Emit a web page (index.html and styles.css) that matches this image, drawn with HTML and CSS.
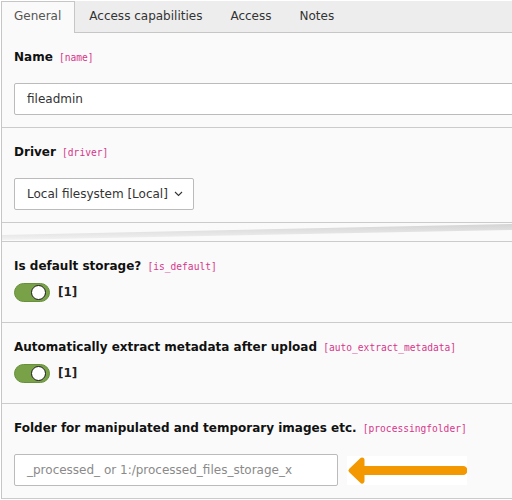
FILE: index.html
```html
<!DOCTYPE html>
<html lang="en">
<head>
<meta charset="utf-8">
<title>File storage</title>
<link rel="stylesheet" href="styles.css">
</head>
<body>
<div class="editor">
  <ul class="tabs">
    <li class="tab active">General</li>
    <li class="tab">Access capabilities</li>
    <li class="tab">Access</li>
    <li class="tab">Notes</li>
  </ul>
  <div class="panel">
    <div class="field">
      <div class="label">Name <code class="key">[name]</code></div>
      <div class="control control-wide">fileadmin</div>
    </div>
    <div class="field">
      <div class="label">Driver <code class="key">[driver]</code></div>
      <div class="control control-select">
        <span>Local filesystem [Local]</span>
        <svg class="chevron" width="9" height="6" viewBox="0 0 9 6"><path d="M1 1 L4.5 4.5 L8 1" fill="none" stroke="#333" stroke-width="1.1"/></svg>
      </div>
    </div>
    <div class="tear">
      <svg class="tear-svg" viewBox="0 0 512 18" preserveAspectRatio="none">
        <defs>
          <linearGradient id="g" x1="0" y1="0" x2="0" y2="1">
            <stop offset="0" stop-color="#d4d4d4"/>
            <stop offset="1" stop-color="#f2f2f2"/>
          </linearGradient>
        </defs>
        <polygon points="0,12 512,1 512,7 0,17" fill="url(#g)"/>
      </svg>
    </div>
    <div class="field field-check">
      <div class="label">Is default storage? <code class="key">[is_default]</code></div>
      <div class="check-row">
        <span class="toggle"><span class="knob"></span></span>
        <span class="check-value">[1]</span>
      </div>
    </div>
    <div class="field field-check">
      <div class="label">Automatically extract metadata after upload <code class="key">[auto_extract_metadata]</code></div>
      <div class="check-row">
        <span class="toggle"><span class="knob"></span></span>
        <span class="check-value">[1]</span>
      </div>
    </div>
    <div class="field">
      <div class="label">Folder for manipulated and temporary images etc. <code class="key">[processingfolder]</code></div>
      <div class="folder-row">
        <div class="control control-folder placeholder">_processed_ or 1:/processed_files_storage_x</div>
        <div class="arrow-box">
          <svg width="120" height="29" viewBox="0 0 120 29">
            <path d="M15 4 L4 14.5 L15 25 Z" fill="#f39800" stroke="#f39800" stroke-width="5" stroke-linejoin="round"/>
            <path d="M12 14.5 L116 14.5" stroke="#f39800" stroke-width="9" stroke-linecap="round"/>
          </svg>
        </div>
      </div>
    </div>
  </div>
</div>
</body>
</html>
```

FILE: styles.css
```css
html, body {
  margin: 0;
  padding: 0;
  background: #fff;
  overflow: hidden;
}
body {
  font-family: "DejaVu Sans", Verdana, sans-serif;
  font-size: 12px;
  color: #333;
}
.editor {
  padding: 1px 0 0 1px;
}
.tabs {
  list-style: none;
  margin: 0;
  padding: 0;
  display: flex;
  align-items: flex-start;
  height: 31px;
  background: #ededed;
  border-bottom: 1px solid #c6c6c6;
}
.tab {
  line-height: 29px;
  padding: 0 13px 2px;
  border: 1px solid transparent;
  border-bottom: none;
  margin-bottom: -1px;
  color: #333;
}
.tab.active {
  padding-left: 12px;
  background: #fafafa;
  border-color: #c6c6c6;
  color: #555;
}
.panel {
  background: #fafafa;
  border-left: 1px solid #c6c6c6;
}
.field {
  padding: 15px 0 12px 12px;
  border-bottom: 1px solid #cbcbcb;
}
.field-check {
  padding-bottom: 20px;
}
.label {
  font-weight: bold;
  line-height: 18px;
  height: 18px;
  color: #111;
  white-space: nowrap;
}
.key {
  font-family: "DejaVu Sans Mono", "Liberation Mono", monospace;
  font-size: 9.6px;
  line-height: 1;
  font-weight: normal;
  color: #d6358a;
  margin-left: 2px;
}
.control {
  margin-top: 17px;
  height: 30px;
  line-height: 30px;
  padding: 0 12px;
  background: #fff;
  border: 1px solid #bbb;
  border-radius: 2px;
  color: #333;
  white-space: nowrap;
}
.control-wide {
  margin-right: -20px;
}
.control-select {
  width: 154px;
  padding-right: 12px;
  display: flex;
  align-items: center;
  justify-content: space-between;
}
.chevron {
  display: block;
  margin-right: -2px;
}
.tear {
  height: 18px;
  border-bottom: 1px solid #cbcbcb;
  background: #fafafa;
}
.tear-svg {
  display: block;
  width: 100%;
  height: 18px;
}
.check-row {
  display: flex;
  align-items: center;
  gap: 8px;
  height: 20px;
  margin-top: 7px;
}
.toggle {
  box-sizing: border-box;
  width: 36px;
  height: 19px;
  border-radius: 10px;
  background: #78a148;
  border: 1px solid #66903a;
  display: flex;
  align-items: center;
  justify-content: flex-end;
  padding-right: 3px;
}
.knob {
  box-sizing: border-box;
  width: 15px;
  height: 15px;
  border-radius: 50%;
  background: #fff;
  border: 1px solid #1a1a1a;
}
.check-value {
  font-weight: bold;
  color: #222;
}
.folder-row {
  display: flex;
  align-items: center;
  gap: 9px;
  margin-top: 17px;
}
.folder-row .control {
  margin-top: 0;
}
.control-folder {
  width: 298px;
}
.placeholder {
  color: #8a8a8a;
}
.arrow-box {
  background: #fff;
  width: 120px;
  height: 29px;
}
.arrow-box svg {
  display: block;
}
```
